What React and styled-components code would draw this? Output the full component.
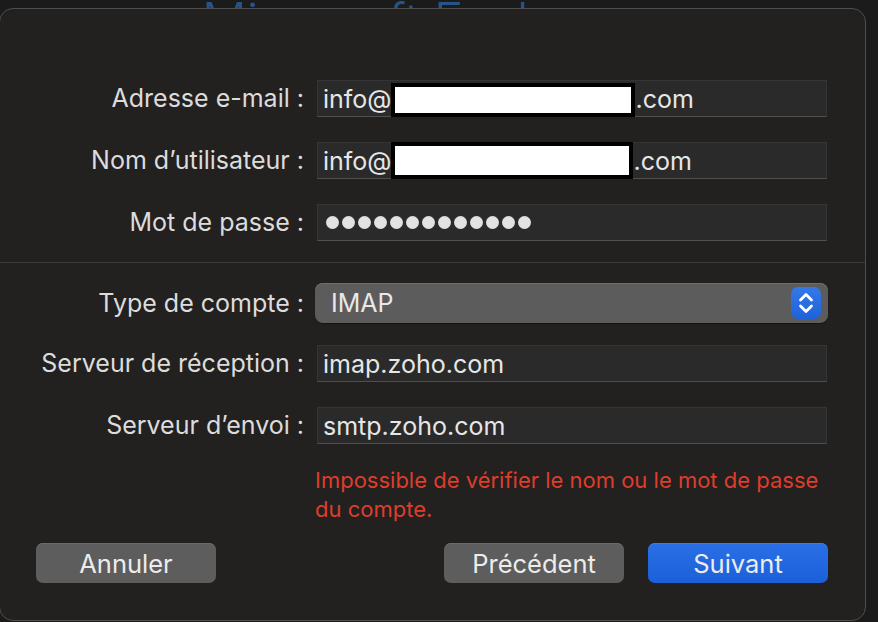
import React from "react";
import styled, { createGlobalStyle } from "styled-components";

const Global = createGlobalStyle`
  html, body { margin: 0; padding: 0; background: #1b1b1b; }
  body { width: 878px; height: 622px; overflow: hidden; font-family: Inter, "Liberation Sans", Arial, sans-serif; }
`;

const Screen = styled.div`
  width: 878px;
  height: 622px;
  background: #1b1b1b;
  display: flex;
  flex-direction: column;
  overflow: hidden;
`;

const Backdrop = styled.div`
  height: 8px;
  overflow: hidden;
  display: flex;
  justify-content: center;
  padding-right: 14px;
`;

const BackTitle = styled.div`
  font-family: Inter, "Liberation Sans", sans-serif;
  font-weight: 300;
  font-size: 50px;
  line-height: 50px;
  margin-top: -4px;
  color: #25548a;
  white-space: nowrap;
`;

const Sheet = styled.div`
  width: 867px;
  height: 613px;
  margin-left: -1px;
  box-sizing: border-box;
  background: #222120;
  border: 1px solid #4e4e4e;
  border-radius: 14px;
  display: flex;
  flex-direction: column;
`;

const Section = styled.div`
  display: grid;
  grid-template-columns: 304px 510px;
  column-gap: 13px;
  row-gap: 25px;
  padding-top: ${(p) => p.$top}px;
  padding-bottom: ${(p) => p.$bottom || 0}px;
  border-bottom: ${(p) => (p.$divider ? "1px solid #393939" : "none")};
  align-items: start;
`;

const Label = styled.div`
  text-align: right;
  color: #dcdcdc;
  font-size: 25px;
  line-height: 37px;
  white-space: nowrap;
`;

const Field = styled.div`
  height: 37px;
  box-sizing: border-box;
  background: #2a2a2a;
  border: 1px solid #353535;
  border-bottom-color: #4f4f4f;
  display: flex;
  align-items: center;
  padding-left: 5px;
  color: #e6e6e6;
  font-size: 25px;
  white-space: nowrap;
`;

const Redaction = styled.span`
  display: inline-block;
  box-sizing: border-box;
  width: ${(p) => p.$w}px;
  height: ${(p) => p.$h}px;
  background: #ffffff;
  border: 4px solid #000;
  margin-top: ${(p) => p.$dy || 0}px;
`;

const Dots = styled.div`
  display: flex;
  gap: 3px;
  padding-left: 3px;
`;

const Dot = styled.span`
  width: 13px;
  height: 13px;
  border-radius: 50%;
  background: #e2e2e2;
`;

const Popup = styled.div`
  height: 40px;
  margin: 0 -1px -3px -2px;
  box-sizing: border-box;
  background: #5c5c5c;
  border-radius: 8px;
  box-shadow: inset 0 1px 0 #6e6e6e, 0 1px 1px rgba(0, 0, 0, 0.4);
  display: flex;
  align-items: center;
  justify-content: space-between;
  padding: 0 7px 0 16px;
  color: #e8e8e8;
  font-size: 25px;
`;

const PopupLabel = styled(Label)`
  line-height: 40px;
  margin-bottom: -3px;
`;

const Stepper = styled.div`
  width: 30px;
  height: 32px;
  border-radius: 7px;
  background: linear-gradient(#3479ea, #1f62d8);
  display: flex;
  align-items: center;
  justify-content: center;
`;

const Error = styled.div`
  margin: 22px 0 0 315px;
  width: 515px;
  color: #df3d2c;
  font-size: 22px;
  line-height: 29px;
`;

const Buttons = styled.div`
  display: flex;
  align-items: center;
  margin-top: 19px;
  padding: 0 37px 0 36px;
  gap: 24px;
`;

const Button = styled.button`
  width: 180px;
  height: 40px;
  border: none;
  border-radius: 7px;
  font-family: inherit;
  font-size: 25.5px;
  color: #ececec;
  background: ${(p) => (p.$primary ? "linear-gradient(#2a6fe6, #1b60d8)" : "#5d5d5d")};
  box-shadow: ${(p) => (p.$primary ? "inset 0 1px 0 #3a7cef" : "inset 0 1px 0 #6a6a6a")};
  padding: 0;
  margin-left: ${(p) => (p.$pushRight ? "auto" : "0")};
`;

export default function App() {
  return (
    <Screen>
      <Global />
      <Backdrop>
        <BackTitle>Microsoft Exchange</BackTitle>
      </Backdrop>
      <Sheet>
        <Section $top={71} $bottom={21} $divider>
          <Label>Adresse e-mail :</Label>
          <Field>
            info@<Redaction $w={244} $h={34} $dy={2} />.com
          </Field>
          <Label>Nom d’utilisateur :</Label>
          <Field>
            info@<Redaction $w={242} $h={37} $dy={0} />.com
          </Field>
          <Label>Mot de passe :</Label>
          <Field>
            <Dots>
              {Array.from({ length: 13 }).map((_, i) => (
                <Dot key={i} />
              ))}
            </Dots>
          </Field>
        </Section>
        <Section $top={20}>
          <PopupLabel>Type de compte :</PopupLabel>
          <Popup>
            IMAP
            <Stepper>
              <svg width="18" height="24" viewBox="0 0 18 24" fill="none" stroke="#fff" strokeWidth="2.8" strokeLinecap="round" strokeLinejoin="round">
                <polyline points="3.5,9 9,3.5 14.5,9" />
                <polyline points="3.5,15 9,20.5 14.5,15" />
              </svg>
            </Stepper>
          </Popup>
          <Label>Serveur de réception :</Label>
          <Field>imap.zoho.com</Field>
          <Label>Serveur d’envoi :</Label>
          <Field>smtp.zoho.com</Field>
        </Section>
        <Error>
          Impossible de vérifier le nom ou le mot de passe du compte.
        </Error>
        <Buttons>
          <Button>Annuler</Button>
          <Button $pushRight>Précédent</Button>
          <Button $primary>Suivant</Button>
        </Buttons>
      </Sheet>
    </Screen>
  );
}
